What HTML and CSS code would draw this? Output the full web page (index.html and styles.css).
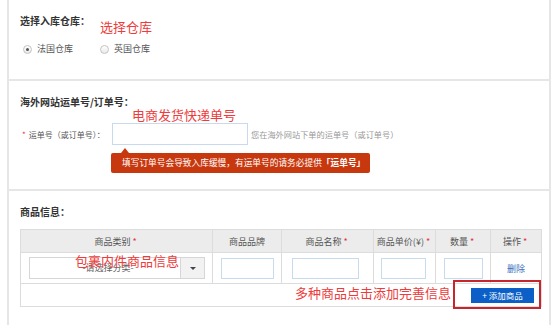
FILE: index.html
```html
<!DOCTYPE html>
<html lang="zh-CN">
<head>
  <meta charset="UTF-8">
  <title>入库申请</title>
  <link rel="stylesheet" href="styles.css">
</head>
<body>

<div class="panel">

  <!-- 仓库选择 -->
  <div class="section">
    <div class="section-title">选择入库仓库：</div>
    <div class="radio-row">
      <label class="radio checked"><span class="dot"></span>法国仓库</label>
      <label class="radio"><span class="dot"></span>英国仓库</label>
    </div>
    <span class="note note-warehouse">选择仓库</span>
  </div>

  <!-- 运单号 -->
  <div class="section">
    <div class="section-title">海外网站运单号/订单号：</div>
    <div class="field-row">
      <span class="field-label"><i class="req">*</i>运单号（或订单号）：</span>
      <input type="text" class="field-input">
      <span class="field-hint">您在海外网站下单的运单号（或订单号）</span>
    </div>
    <div class="tip">填写订单号会导致入库缓慢，有运单号的请务必提供<b>「运单号」</b></div>
    <span class="note note-track">电商发货快递单号</span>
  </div>

  <!-- 商品信息 -->
  <div class="section section-goods">
    <div class="section-title">商品信息：</div>
    <table class="goods-table">
      <thead>
        <tr>
          <th class="c1">商品类别<i class="req">*</i></th>
          <th class="c2">商品品牌</th>
          <th class="c3">商品名称<i class="req">*</i></th>
          <th class="c4">商品单价(¥)<i class="req">*</i></th>
          <th class="c5">数量<i class="req">*</i></th>
          <th class="c6">操作<i class="req">*</i></th>
        </tr>
      </thead>
      <tbody>
        <tr class="item-row">
          <td class="cell-left">
            <div class="select">
              <span class="select-text">-请选择分类-</span>
              <span class="select-btn"><span class="caret"></span></span>
            </div>
          </td>
          <td><input type="text" class="cell-input w-brand"></td>
          <td><input type="text" class="cell-input w-name"></td>
          <td><input type="text" class="cell-input w-price"></td>
          <td><input type="text" class="cell-input w-qty"></td>
          <td><a href="#" class="del-link">删除</a></td>
        </tr>
        <tr class="add-row">
          <td colspan="6"><button class="add-btn">+ 添加商品</button></td>
        </tr>
      </tbody>
    </table>
    <span class="note note-goods">包裹内件商品信息</span>
    <span class="note note-add">多种商品点击添加完善信息</span>
    <span class="mark-box"></span>
  </div>

</div>

</body>
</html>
```

FILE: styles.css
```css
body {
  margin: 0;
  background: #fff;
  font-family: "Noto Sans CJK SC", "Liberation Sans", sans-serif;
  color: #555;
  font-size: 9px;
}

.panel {
  margin-left: 7px;
  width: 544px;
  height: 325px;
  box-sizing: border-box;
  border-left: 2px solid #e6e6e6;
  border-right: 2px solid #e6e6e6;
}

.section {
  position: relative;
  padding: 14px 0 23px 11px;
  border-bottom: 2px solid #e6e6e6;
}

.section-title {
  height: 14px;
  line-height: 14px;
  font-size: 10px;
  font-weight: bold;
  color: #333;
}

/* radios */
.radio-row {
  display: flex;
  gap: 27px;
  margin-top: 14px;
  height: 14px;
  line-height: 14px;
  padding-left: 3px;
}

.radio {
  display: flex;
  align-items: center;
  gap: 5px;
  color: #555;
}

.radio .dot {
  width: 7px;
  height: 7px;
  border: 1px solid #c4c4c4;
  border-radius: 50%;
  background: linear-gradient(#fff, #e9e9e9);
  position: relative;
}

.radio.checked .dot::after {
  content: "";
  position: absolute;
  left: 2px;
  top: 2px;
  width: 3px;
  height: 3px;
  border-radius: 50%;
  background: #555;
}

/* tracking number */
.section:nth-child(2) {
  padding-bottom: 16px;
}

.field-row {
  display: flex;
  align-items: center;
  margin-top: 14px;
  height: 22px;
}

.field-label {
  width: 92px;
  padding-left: 2px;
  box-sizing: border-box;
  white-space: nowrap;
  font-size: 8px;
}

.req {
  font-style: normal;
  color: #e5343a;
  margin: 0 2px;
}

.field-label .req {
  margin: 0 3px 0 0;
}

.field-input {
  width: 136px;
  height: 22px;
  box-sizing: border-box;
  border: 1px solid #c8daee;
  margin: 0;
  padding: 0 4px;
}

.field-hint {
  margin-left: 3px;
  color: #999;
  font-size: 8.2px;
  white-space: nowrap;
}

.tip {
  position: relative;
  margin: 8px 0 0 91px;
  width: 259px;
  height: 20px;
  line-height: 20px;
  box-sizing: border-box;
  padding-left: 11px;
  background: #c8380e;
  border-radius: 2px;
  color: #fff;
  font-size: 8.7px;
  white-space: nowrap;
}

.tip::before {
  content: "";
  position: absolute;
  left: 10px;
  top: -5px;
  border-left: 4px solid transparent;
  border-right: 4px solid transparent;
  border-bottom: 5px solid #c8380e;
}

/* goods table */
.section-goods {
  border-bottom: none;
}

.goods-table {
  margin-top: 10px;
  width: 515px;
  border-collapse: collapse;
  table-layout: fixed;
}

.goods-table th,
.goods-table td {
  border: 1px solid #dcdcdc;
  padding: 0;
  text-align: center;
  font-weight: normal;
}

.goods-table thead tr {
  height: 23px;
  background: #ececec;
}

.goods-table th {
  color: #555;
}

.c1 { width: 191px; }
.c2 { width: 68px; }
.c3 { width: 91px; }
.c4 { width: 61px; }
.c5 { width: 54px; }
.c6 { width: 50px; }

.item-row {
  height: 31px;
}

.cell-left {
  text-align: left;
  padding-left: 8px !important;
}

.select {
  display: flex;
  width: 176px;
  height: 22px;
  box-sizing: border-box;
  border: 1px solid #d6d6d6;
  background: #fff;
}

.select-text {
  flex: 1;
  line-height: 20px;
  padding-left: 6px;
  color: #666;
}

.select-btn {
  width: 23px;
  border-left: 1px solid #d6d6d6;
  background: #f2f2f2;
  display: flex;
  align-items: center;
  justify-content: center;
}

.caret {
  border-left: 3px solid transparent;
  border-right: 3px solid transparent;
  border-top: 3px solid #444;
}

.cell-input {
  height: 21px;
  box-sizing: border-box;
  border: 1px solid #c8daee;
  margin: 0;
  padding: 0 3px;
  vertical-align: middle;
}

.w-brand { width: 53px; }
.w-name { width: 67px; margin-left: -4px; }
.w-price { width: 45px; margin-left: -3px; }
.w-qty { width: 39px; }

.del-link {
  color: #3a6fc0;
  text-decoration: none;
}

.add-row {
  height: 23px;
}

.add-row td {
  text-align: right;
  padding-right: 7px;
}

.add-btn {
  width: 63px;
  height: 15px;
  border: none;
  background: #0b5fc6;
  color: #fff;
  font-family: inherit;
  font-size: 8.5px;
  padding: 0;
  vertical-align: middle;
}

/* red annotations */
.note {
  position: absolute;
  font-size: 13px;
  line-height: 14px;
  color: #ee3b3b;
  white-space: nowrap;
}

.note-warehouse { left: 91px; top: 20px; }
.note-track { left: 123px; top: 27px; }
.note-goods { left: 66px; top: 63px; }
.note-add { left: 286px; top: 95px; }

.mark-box {
  position: absolute;
  left: 444px;
  top: 89px;
  width: 88px;
  height: 29px;
  box-sizing: border-box;
  border: 2px solid #c8242b;
}
```
